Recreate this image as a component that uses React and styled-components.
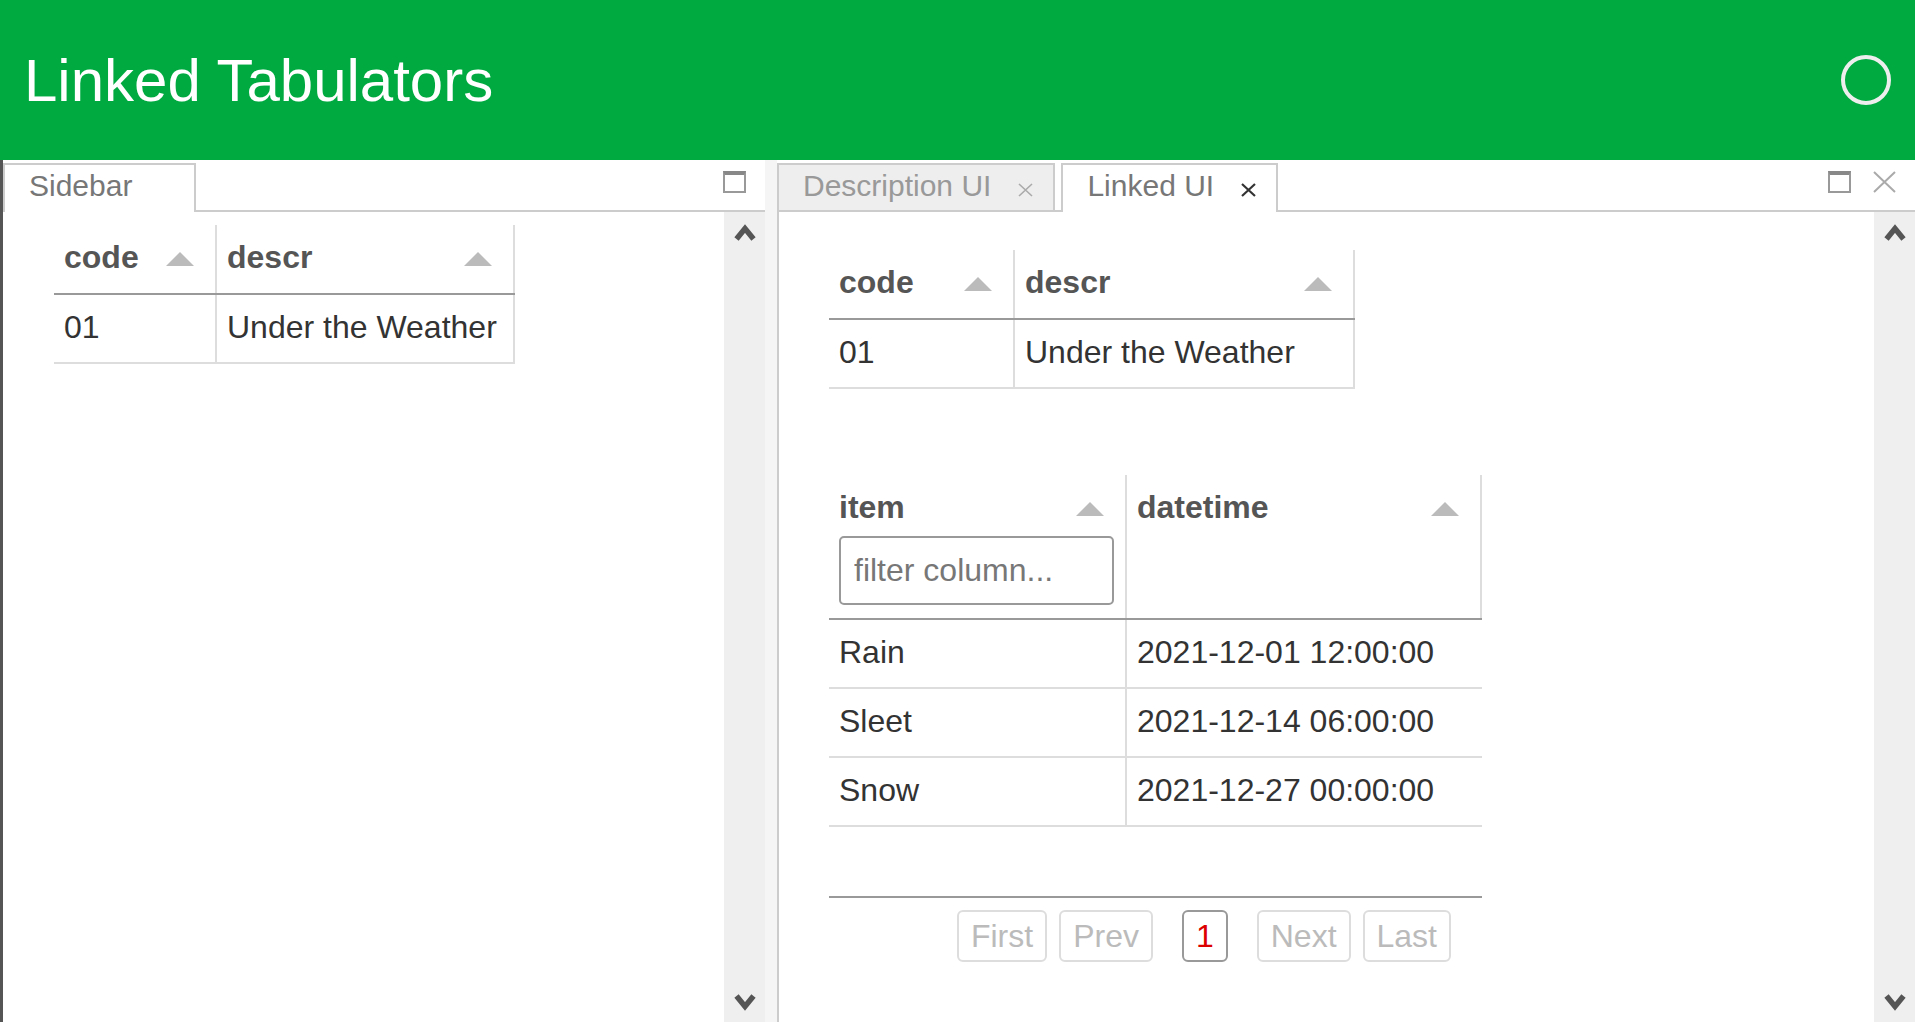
import React from 'react';
import styled, { createGlobalStyle } from 'styled-components';

const GlobalStyle = createGlobalStyle`
  html, body { margin: 0; padding: 0; height: 100%; overflow: hidden; background: #fff; }
  body { font-family: "Liberation Sans", Arial, Helvetica, sans-serif; }
  #root { height: 100%; }
`;

const Page = styled.div`
  display: flex;
  flex-direction: column;
  width: 1915px;
  height: 1022px;
`;

const Header = styled.header`
  flex: none;
  height: 160px;
  box-sizing: border-box;
  padding: 0 24px 0 24px;
  background: #00aa41;
  display: flex;
  align-items: center;
  justify-content: space-between;
`;

const Title = styled.h1`
  margin: 0;
  font-size: 60px;
  font-weight: normal;
  line-height: normal;
  color: #fff;
`;

const BusyIndicator = styled.div`
  width: 50px;
  height: 50px;
  box-sizing: border-box;
  border: 4px solid #eee;
  border-radius: 50%;
`;

const Main = styled.div`
  flex: 1;
  display: flex;
  min-height: 0;
`;

const Panel = styled.section`
  flex: none;
  width: ${(p) => p.$width}px;
  box-sizing: border-box;
  display: flex;
  flex-direction: column;
  border-left: ${(p) => (p.$edge ? '3px solid #555' : 'none')};
`;

const Splitter = styled.div`
  flex: none;
  width: 12px;
  background: #f5f5f5;
`;

const TabStrip = styled.div`
  flex: none;
  height: 52px;
  box-sizing: border-box;
  border-bottom: 2px solid #ccc;
  display: flex;
  align-items: flex-end;
  gap: 6px;
  padding-right: 19px;
  background: #fff;
`;

const Tab = styled.div`
  box-sizing: border-box;
  height: ${(p) => (p.$active ? 49 : 47)}px;
  margin-bottom: ${(p) => (p.$active ? -2 : 0)}px;
  padding: 4px 19px 0 24px;
  border: 2px solid #ccc;
  border-bottom: none;
  background: ${(p) => (p.$active ? '#fff' : '#eee')};
  color: ${(p) => (p.$active ? '#777' : '#999')};
  font-size: 30px;
  line-height: 34px;
  display: flex;
  align-items: flex-start;
  gap: 26px;
  white-space: nowrap;
`;

const TabCloseIcon = styled.svg`
  flex: none;
  margin-top: 13px;
  visibility: ${(p) => (p.$hidden ? 'hidden' : 'visible')};
`;

const Controls = styled.div`
  margin-left: auto;
  align-self: flex-start;
  margin-top: 11px;
  display: flex;
  gap: 22px;
`;

const MaximiseIcon = styled.div`
  width: 23px;
  height: 22px;
  box-sizing: border-box;
  border: 2px solid #999;
  border-top: 4px solid #888;
  background: #fff;
`;

const Body = styled.div`
  flex: 1;
  min-height: 0;
  display: flex;
  border-left: ${(p) => (p.$bordered ? '2px solid #ccc' : 'none')};
`;

const Content = styled.div`
  flex: 1;
  min-width: 0;
  overflow: hidden;
  box-sizing: border-box;
  padding-left: ${(p) => p.$pl}px;
  display: flex;
  flex-direction: column;
  align-items: flex-start;
`;

const Scrollbar = styled.div`
  flex: none;
  width: 41px;
  box-sizing: border-box;
  padding: 11px 0 10px;
  background: #efefef;
  display: flex;
  flex-direction: column;
  align-items: center;
  justify-content: space-between;
`;

const Table = styled.div`
  margin-top: ${(p) => p.$mt}px;
  display: flex;
  flex-direction: column;
  font-size: 32px;
  line-height: 37px;
  color: #333;
`;

const HeaderRow = styled.div`
  display: flex;
  border-bottom: 2px solid #999;
`;

const HeaderCell = styled.div`
  width: ${(p) => p.$w}px;
  height: ${(p) => p.$h}px;
  box-sizing: border-box;
  padding: 14px 21px 0 10px;
  border-right: 2px solid #ddd;
  display: flex;
  flex-direction: column;
`;

const TitleLine = styled.div`
  display: flex;
  justify-content: space-between;
  align-items: flex-start;
`;

const ColTitle = styled.span`
  font-weight: bold;
  color: #555;
`;

const SortArrow = styled.span`
  width: 0;
  height: 0;
  margin-top: 13px;
  border-left: 14.5px solid transparent;
  border-right: 14.5px solid transparent;
  border-bottom: 14px solid #bbb;
`;

const FilterInput = styled.input`
  display: block;
  margin: 10px 0 0;
  width: 275px;
  height: 69px;
  box-sizing: border-box;
  padding: 0 13px;
  border: 2px solid #999;
  border-radius: 5px;
  font-family: inherit;
  font-size: 32px;
  color: #333;
  background: #fff;
  outline: none;
  &::placeholder { color: #777; }
`;

const RowsArea = styled.div`
  min-height: ${(p) => p.$minH || 0}px;
`;

const Row = styled.div`
  display: flex;
  border-bottom: 2px solid #ddd;
`;

const Cell = styled.div`
  width: ${(p) => p.$w}px;
  height: 67px;
  box-sizing: border-box;
  padding: 14px 10px 0;
  border-right: ${(p) => (p.$last ? 'none' : '2px solid #ddd')};
  white-space: nowrap;
  overflow: hidden;
`;

const Footer = styled.div`
  border-top: 2px solid #999;
  padding: 12px 31px 12px;
  display: flex;
  justify-content: flex-end;
  align-items: center;
  gap: 12px;
`;

const Pages = styled.span`
  margin: 0 17px;
  display: flex;
`;

const PageButton = styled.button`
  height: 52px;
  box-sizing: border-box;
  padding: 1px 12px 0;
  border: 2px solid ${(p) => (p.$active ? '#999' : '#ddd')};
  border-radius: 6px;
  background: #fff;
  color: ${(p) => (p.$active ? '#d00' : '#bbb')};
  font-family: inherit;
  font-size: 32px;
  line-height: 45px;
`;

const Chevron = ({ down }) => (
  <svg width="22" height="18" viewBox="0 0 22 18" style={down ? { transform: 'rotate(180deg)' } : undefined}>
    <polyline points="2.5,16 11,5.5 19.5,16" fill="none" stroke="#555" strokeWidth="5.5" strokeLinejoin="miter" strokeLinecap="butt" />
  </svg>
);

const CloseX = ({ dark, hidden }) => (
  <TabCloseIcon $hidden={hidden} width="17" height="16" viewBox="0 0 17 16">
    <path d="M2 2 L15 14 M15 2 L2 14" stroke={dark ? '#333' : '#aaa'} strokeWidth={dark ? 2.2 : 1.6} fill="none" />
  </TabCloseIcon>
);

const WindowClose = () => (
  <svg width="23" height="22" viewBox="0 0 23 22">
    <path d="M1 1 L22 21 M22 1 L1 21" stroke="#aaa" strokeWidth="2" fill="none" />
  </svg>
);

const SortHeader = ({ w, h, title, children }) => (
  <HeaderCell $w={w} $h={h}>
    <TitleLine>
      <ColTitle>{title}</ColTitle>
      <SortArrow />
    </TitleLine>
    {children}
  </HeaderCell>
);

const DescrTable = ({ mt, codeW, descrW }) => (
  <Table $mt={mt}>
    <HeaderRow>
      <SortHeader w={codeW} h={68} title="code" />
      <SortHeader w={descrW} h={68} title="descr" />
    </HeaderRow>
    <Row>
      <Cell $w={codeW}>01</Cell>
      <Cell $w={descrW}>Under the Weather</Cell>
    </Row>
  </Table>
);

const items = [
  ['Rain', '2021-12-01 12:00:00'],
  ['Sleet', '2021-12-14 06:00:00'],
  ['Snow', '2021-12-27 00:00:00'],
];

const ItemTable = () => (
  <Table $mt={86}>
    <HeaderRow>
      <SortHeader w={298} h={143} title="item">
        <FilterInput placeholder="filter column..." />
      </SortHeader>
      <SortHeader w={355} h={143} title="datetime" />
    </HeaderRow>
    <RowsArea $minH={276}>
      {items.map(([item, dt]) => (
        <Row key={item}>
          <Cell $w={298}>{item}</Cell>
          <Cell $w={355} $last>{dt}</Cell>
        </Row>
      ))}
    </RowsArea>
    <Footer>
      <PageButton disabled>First</PageButton>
      <PageButton disabled>Prev</PageButton>
      <Pages>
        <PageButton $active>1</PageButton>
      </Pages>
      <PageButton disabled>Next</PageButton>
      <PageButton disabled>Last</PageButton>
    </Footer>
  </Table>
);

export default function App() {
  return (
    <>
      <GlobalStyle />
      <Page>
        <Header>
          <Title>Linked Tabulators</Title>
          <BusyIndicator />
        </Header>
        <Main>
          <Panel $width={765} $edge>
            <TabStrip>
              <Tab $active>
                Sidebar
                <CloseX hidden />
              </Tab>
              <Controls>
                <MaximiseIcon />
              </Controls>
            </TabStrip>
            <Body>
              <Content $pl={51}>
                <DescrTable mt={13} codeW={163} descrW={298} />
              </Content>
              <Scrollbar>
                <Chevron />
                <Chevron down />
              </Scrollbar>
            </Body>
          </Panel>
          <Splitter />
          <Panel $width={1138}>
            <TabStrip>
              <Tab>
                Description UI
                <CloseX />
              </Tab>
              <Tab $active>
                Linked UI
                <CloseX dark />
              </Tab>
              <Controls>
                <MaximiseIcon />
                <WindowClose />
              </Controls>
            </TabStrip>
            <Body $bordered>
              <Content $pl={50}>
                <DescrTable mt={38} codeW={186} descrW={340} />
                <ItemTable />
              </Content>
              <Scrollbar>
                <Chevron />
                <Chevron down />
              </Scrollbar>
            </Body>
          </Panel>
        </Main>
      </Page>
    </>
  );
}
